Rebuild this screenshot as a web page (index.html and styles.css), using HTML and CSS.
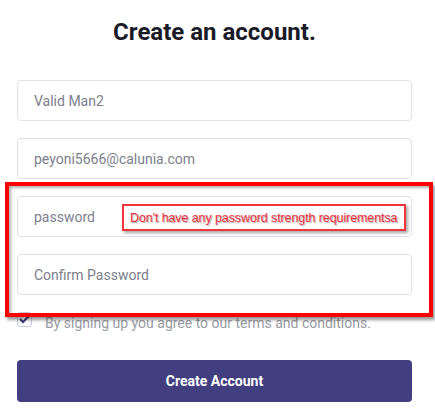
FILE: index.html
```html
<!DOCTYPE html>
<html>
<head>
<meta charset="utf-8">
<link rel="stylesheet" href="styles.css">
</head>
<body>
<div class="page">
  <h1 class="title">Create an account.</h1>
  <form class="form">
    <div class="field"><span class="ph">Valid Man2</span></div>
    <div class="field"><span class="ph">peyoni5666@calunia.com</span></div>
    <div class="field field-pw">
      <span class="ph">password</span>
      <div class="note">Don't have any password strength requirementsa</div>
    </div>
    <div class="field"><span class="ph">Confirm Password</span></div>
    <label class="terms">
      <span class="check"><svg width="11" height="9" viewBox="0 0 11 9"><path d="M1 4 L4 7 L10 1" fill="none" stroke="#3c3a78" stroke-width="2"/></svg></span>
      <span class="terms-text">By signing up you agree to our terms and conditions.</span>
    </label>
    <button type="button" class="btn">Create Account</button>
  </form>
  <div class="highlight"></div>
</div>
</body>
</html>
```
FILE: styles.css
```css
html, body {
  margin: 0;
  padding: 0;
  background: #fff;
}
.page {
  position: relative;
  width: 435px;
  height: 417px;
  font-family: Roboto, "Liberation Sans", sans-serif;
  padding: 0 23px 0 17px;
  box-sizing: border-box;
}
.title {
  margin: 0;
  padding-top: 18px;
  height: 80px;
  box-sizing: border-box;
  text-align: center;
  font-size: 24px;
  font-weight: 700;
  color: #1b1b28;
  line-height: 28px;
}
.form {
  display: flex;
  flex-direction: column;
}
.field {
  position: relative;
  height: 41px;
  border: 1px solid #dfe2ea;
  border-radius: 4px;
  box-sizing: border-box;
  display: flex;
  align-items: center;
  padding-left: 16px;
  margin-bottom: 17px;
}
.ph {
  font-size: 14px;
  color: #7c808c;
}
.note {
  position: absolute;
  left: 104px;
  top: 7px;
  width: 284px;
  height: 27px;
  box-sizing: border-box;
  border: 2px solid #f2343e;
  background: #fff;
  box-shadow: 2px 2px 3px rgba(0,0,0,0.35);
  font-family: "Liberation Sans", Arial, sans-serif;
  font-size: 12.5px;
  color: #f2303c;
  text-shadow: 1px 1px 1px rgba(0,0,0,0.35);
  padding: 5px 0 0 6px;
  white-space: nowrap;
  letter-spacing: -0.1px;
}
.terms {
  display: flex;
  align-items: flex-start;
  gap: 13px;
  height: 16px;
}
.check {
  width: 15px;
  height: 15px;
  border: 1px solid #c9cbe0;
  border-radius: 3px;
  box-sizing: border-box;
  display: flex;
  align-items: center;
  justify-content: center;
  flex: none;
}
.terms-text {
  font-size: 14px;
  line-height: 16px;
  margin-top: 3px;
  color: #9a9ca4;
}
.btn {
  margin-top: 32px;
  height: 42px;
  border: none;
  border-radius: 4px;
  background: #413f80;
  color: #fff;
  font-family: Roboto, "Liberation Sans", sans-serif;
  font-weight: 700;
  font-size: 14px;
}
.highlight {
  position: absolute;
  left: 5px;
  top: 182px;
  width: 428px;
  height: 135px;
  box-sizing: border-box;
  border: 4px solid #ff0000;
  box-shadow: 2px 3px 3px rgba(0,0,0,0.4), inset 2px 2px 3px rgba(0,0,0,0.3);
  pointer-events: none;
}
```
